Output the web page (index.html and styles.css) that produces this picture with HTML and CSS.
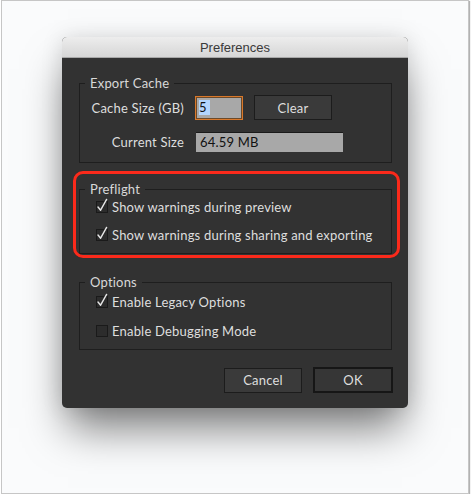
FILE: index.html
```html
<!DOCTYPE html>
<html>
<head>
<meta charset="utf-8">
<link rel="stylesheet" href="styles.css">
</head>
<body>
<div class="frame">
  <div class="dialog">
    <div class="titlebar">Preferences</div>
    <div class="content">
      <fieldset class="group export">
        <legend>Export Cache</legend>
        <div class="cache-grid">
          <span class="lbl">Cache Size (GB)</span>
          <div class="cache-row">
            <span class="input"><span class="sel">5</span></span>
            <button class="btn clear">Clear</button>
          </div>
          <span class="lbl">Current Size</span>
          <div class="field">64.59 MB</div>
        </div>
      </fieldset>

      <div class="highlight">
        <fieldset class="group preflight">
          <legend>Preflight</legend>
          <div class="check-row">
            <svg class="cb" width="12" height="12" viewBox="0 0 12 12"><rect x="0.5" y="0.5" width="11" height="11" class="box"/><path d="M2 6 L4.6 9.2 L10.6 -1.6" class="tick"/></svg>
            <span>Show warnings during preview</span>
          </div>
          <div class="check-row">
            <svg class="cb" width="12" height="12" viewBox="0 0 12 12"><rect x="0.5" y="0.5" width="11" height="11" class="box"/><path d="M2 6 L4.6 9.2 L10.6 -1.6" class="tick"/></svg>
            <span>Show warnings during sharing and exporting</span>
          </div>
        </fieldset>
      </div>

      <fieldset class="group options">
        <legend>Options</legend>
        <div class="check-row">
          <svg class="cb" width="12" height="12" viewBox="0 0 12 12"><rect x="0.5" y="0.5" width="11" height="11" class="box"/><path d="M2 6 L4.6 9.2 L10.6 -1.6" class="tick"/></svg>
          <span>Enable Legacy Options</span>
        </div>
        <div class="check-row">
          <svg class="cb" width="12" height="12" viewBox="0 0 12 12"><rect x="0.5" y="0.5" width="11" height="11" class="box"/></svg>
          <span>Enable Debugging Mode</span>
        </div>
      </fieldset>

      <div class="actions">
        <button class="btn cancel">Cancel</button>
        <button class="btn ok">OK</button>
      </div>
    </div>
  </div>
</div>
</body>
</html>
```

FILE: styles.css
```css
html, body {
  margin: 0;
  padding: 0;
  background: #ffffff;
}

.frame {
  box-sizing: border-box;
  margin-left: 1px;
  width: 468px;
  height: 494px;
  border: 1px solid #c6c6c6;
  background: #fafbfc;
  box-shadow: 1px 1px 1px rgba(0, 0, 0, 0.3);
  padding: 36px 0 0 60px;
}

.dialog {
  width: 346px;
  height: 371px;
  background: #323232;
  border-radius: 5px;
  overflow: hidden;
  box-shadow: 0 26px 40px -6px rgba(0, 0, 0, 0.5), 0 0 22px rgba(0, 0, 0, 0.12);
}

.titlebar {
  height: 21px;
  line-height: 21px;
  text-align: center;
  font-family: "Liberation Sans", Arial, sans-serif;
  font-size: 13px;
  color: #3a3a3a;
  background: linear-gradient(#ededed, #d6d6d6);
  border-bottom: 1px solid #a8a8a8;
  box-sizing: border-box;
}

.content {
  padding: 0 16px 0 17px;
  font-family: Lato, "Liberation Sans", sans-serif;
  font-size: 13px;
  letter-spacing: 0.2px;
  color: #dedede;
}

.group {
  margin: 0;
  border: 1px solid #1e1e1e;
  min-width: 0;
  padding: 4px 0 10px 0;
}

.group legend {
  margin-left: 5px;
  padding: 0 5px;
  line-height: 16px;
  color: #d8d8d8;
}

.export {
  margin-top: 17px;
}

.cache-grid {
  display: grid;
  grid-template-columns: 104px auto;
  column-gap: 11px;
  row-gap: 12px;
  align-items: center;
}

.lbl {
  text-align: right;
}

.cache-row {
  display: flex;
  align-items: center;
  gap: 11px;
  height: 25px;
}

.input {
  box-sizing: border-box;
  width: 48px;
  height: 24px;
  border: 1px solid #d9782a;
  box-shadow: inset 0 0 0 1px #6b4a2a;
  background: #a8a8a8;
  display: flex;
  align-items: center;
  padding-left: 3px;
}

.sel {
  background: #b3d5fd;
  color: #111;
  line-height: 15px;
  padding: 0 3px 0 0;
}

.field {
  box-sizing: border-box;
  margin-left: 1px;
  width: 147px;
  height: 20px;
  line-height: 19px;
  background: #a8a8a8;
  border-top: 1px solid #1a1a1a;
  color: #111;
  padding-left: 4px;
}

.btn {
  box-sizing: border-box;
  font-family: Lato, "Liberation Sans", sans-serif;
  font-size: 13px;
  letter-spacing: 0.2px;
  color: #dedede;
  background: #3a3a3a;
  border: 1px solid #1c1c1c;
  padding: 0;
  margin: 0;
  width: 78px;
  height: 25px;
}

.highlight {
  position: relative;
  margin-top: 18px;
}

.highlight::after {
  content: "";
  position: absolute;
  top: -10px;
  left: -6px;
  right: -8px;
  bottom: -4px;
  border: 3px solid #fb2a1b;
  border-radius: 10px;
  box-shadow: 0 0 1px rgba(120, 0, 0, 0.4);
}

.check-row {
  display: flex;
  align-items: center;
  gap: 4px;
  height: 16px;
  padding-left: 16px;
}

.preflight {
  padding-top: 2px;
}

.preflight .check-row + .check-row {
  margin-top: 12px;
}

.options {
  margin-top: 20px;
  padding-top: 4px;
}

.options .check-row + .check-row {
  margin-top: 13px;
}

.cb {
  overflow: visible;
  flex: none;
}

.cb .box {
  fill: #2c2c2c;
  stroke: #1a1a1a;
  stroke-width: 1;
}

.cb .tick {
  fill: none;
  stroke: #e6e6e6;
  stroke-width: 1.4;
  stroke-linecap: round;
  stroke-linejoin: round;
}

.actions {
  display: flex;
  justify-content: flex-end;
  align-items: center;
  gap: 11px;
  margin-top: 17px;
  margin-right: -1px;
}

.ok {
  width: 80px;
  height: 26px;
  border: 2px solid #161616;
  background: #363636;
}
```
